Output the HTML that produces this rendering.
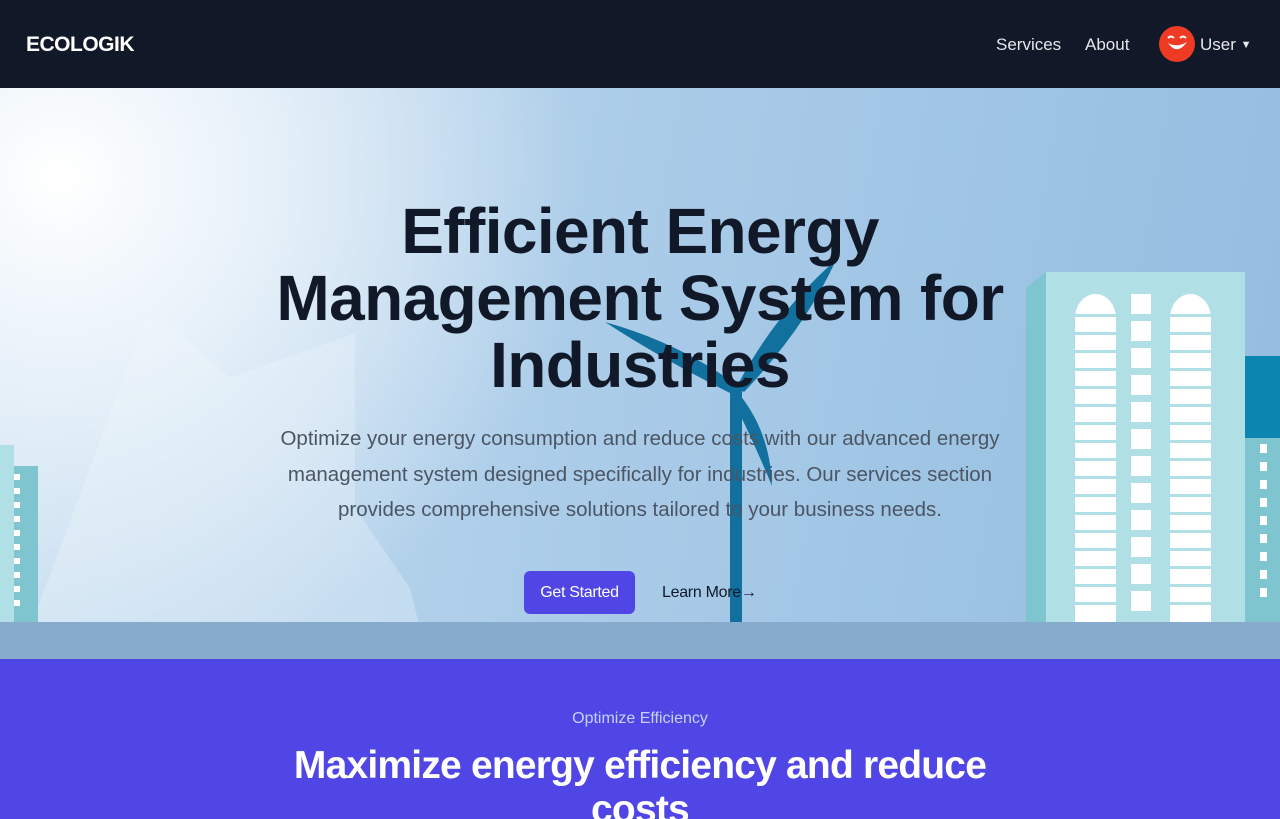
<!DOCTYPE html>
<html><head><meta charset="utf-8"><style>
*{margin:0;padding:0;box-sizing:border-box}
html,body{width:1280px;height:819px;overflow:hidden}
body{font-family:"Liberation Sans",sans-serif;background:#4f46e5}
nav{height:88px;background:#111827;position:relative;color:#fff}
.logo{position:absolute;left:26px;top:33px;font-weight:bold;font-size:21px;letter-spacing:-0.5px}
.nl{position:absolute;top:35px;font-size:17px;color:#e5e7eb}
.av{position:absolute;left:1159px;top:26px;width:36px;height:36px;border-radius:50%;background:#ef3b24}
.hero{position:relative;height:571px;overflow:hidden;background:radial-gradient(ellipse 520px 520px at 60px 90px,#ffffff 0%,#eaf3fa 35%,rgba(180,212,236,0) 100%),linear-gradient(100deg,#c6ddf0 0%,#a9cbe8 50%,#93bde0 100%)}
.ground{position:absolute;left:0;top:534px;width:1280px;height:37px;background:#87abcc}
h1{position:absolute;left:0;width:1280px;top:110px;text-align:center;font-size:64px;line-height:67px;font-weight:bold;color:#111827;letter-spacing:-0.6px}
.p{position:absolute;left:260px;width:760px;top:333px;text-align:center;font-size:20.5px;line-height:35.5px;color:#4b5563}
.btn{position:absolute;left:524px;top:483px;width:111px;height:43px;background:#4f46e5;border-radius:6px;color:#fff;font-size:16px;text-align:center;line-height:43px;letter-spacing:-0.3px}
.lm{position:absolute;left:662px;top:496px;font-size:16px;color:#111827;letter-spacing:-0.3px}
.sec{text-align:center;color:#fff}
</style></head><body>
<nav>
<div class="logo">ECOLOGIK</div>
<div class="nl" style="left:996px">Services</div>
<div class="nl" style="left:1085px">About</div>
<div class="av"><svg width="36" height="36" viewBox="0 0 36 36"><path d="M9 17 Q18 30 28 16 Q18 22 9 17Z" fill="#fff"/><path d="M9 12 q3 -3 6 0" stroke="#fff" stroke-width="2" fill="none"/><path d="M21 12 q3 -3 6 0" stroke="#fff" stroke-width="2" fill="none"/></svg></div>
<div class="nl" style="left:1200px">User <span style="font-size:11px;vertical-align:2px">▼</span></div>
</nav>
<div class="hero">
<svg width="1280" height="571" style="position:absolute;left:0;top:0">
<polygon points="30,540 150,220 230,290 355,245 355,420 410,500 420,540" fill="#f3f8fc" opacity="0.3"/>
<rect x="0" y="357" width="14" height="180" fill="#b0e0e6"/>
<rect x="14" y="378" width="24" height="160" fill="#7fc5cf"/>
<g fill="#fff">
<rect x="14" y="386" width="6" height="6"/><rect x="14" y="400" width="6" height="6"/><rect x="14" y="414" width="6" height="6"/><rect x="14" y="428" width="6" height="6"/><rect x="14" y="442" width="6" height="6"/><rect x="14" y="456" width="6" height="6"/><rect x="14" y="470" width="6" height="6"/><rect x="14" y="484" width="6" height="6"/><rect x="14" y="498" width="6" height="6"/><rect x="14" y="512" width="6" height="6"/></g>
<g fill="#11709e">
<rect x="730" y="300" width="12" height="236"/>
<path d="M738 298 Q680 255 605 234 Q660 270 732 306Z"/>
<path d="M736 300 Q775 225 836 172 Q805 240 744 304Z"/>
<path d="M734 300 Q770 340 772 398 Q752 350 730 306Z"/>
</g>
<polygon points="1026,200 1046,184 1046,536 1026,536" fill="#7fc5cf"/>
<rect x="1046" y="184" width="199" height="352" fill="#b0e0e6"/>
<g fill="#fff">
<path d="M1075 230 a20.5 24 0 0 1 41 0 v306 h-41z"/>
<path d="M1170 230 a20.5 24 0 0 1 41 0 v306 h-41z"/>
</g>
<g fill="#b0e0e6">
<rect x="1075" y="226" width="136" height="3"/><rect x="1075" y="244" width="136" height="3"/><rect x="1075" y="262" width="136" height="3"/><rect x="1075" y="280" width="136" height="3"/><rect x="1075" y="298" width="136" height="3"/><rect x="1075" y="316" width="136" height="3"/><rect x="1075" y="334" width="136" height="3"/><rect x="1075" y="352" width="136" height="3"/><rect x="1075" y="370" width="136" height="3"/><rect x="1075" y="388" width="136" height="3"/><rect x="1075" y="406" width="136" height="3"/><rect x="1075" y="424" width="136" height="3"/><rect x="1075" y="442" width="136" height="3"/><rect x="1075" y="460" width="136" height="3"/><rect x="1075" y="478" width="136" height="3"/><rect x="1075" y="496" width="136" height="3"/><rect x="1075" y="514" width="136" height="3"/>
</g>
<g fill="#fff">
<rect x="1131" y="206" width="20" height="20"/><rect x="1131" y="233" width="20" height="20"/><rect x="1131" y="260" width="20" height="20"/><rect x="1131" y="287" width="20" height="20"/><rect x="1131" y="314" width="20" height="20"/><rect x="1131" y="341" width="20" height="20"/><rect x="1131" y="368" width="20" height="20"/><rect x="1131" y="395" width="20" height="20"/><rect x="1131" y="422" width="20" height="20"/><rect x="1131" y="449" width="20" height="20"/><rect x="1131" y="476" width="20" height="20"/><rect x="1131" y="503" width="20" height="20"/></g>
<rect x="1245" y="268" width="35" height="82" fill="#0a86b0"/>
<rect x="1245" y="350" width="35" height="186" fill="#7fc5cf"/>
<g fill="#fff"><rect x="1260" y="356" width="7" height="9"/><rect x="1260" y="374" width="7" height="9"/><rect x="1260" y="392" width="7" height="9"/><rect x="1260" y="410" width="7" height="9"/><rect x="1260" y="428" width="7" height="9"/><rect x="1260" y="446" width="7" height="9"/><rect x="1260" y="464" width="7" height="9"/><rect x="1260" y="482" width="7" height="9"/><rect x="1260" y="500" width="7" height="9"/></g>
</svg>
<div class="ground"></div>
<h1>Efficient Energy<br>Management System for<br>Industries</h1>
<div class="p">Optimize your energy consumption and reduce costs with our advanced energy management system designed specifically for industries. Our services section provides comprehensive solutions tailored to your business needs.</div>
<div class="btn">Get Started</div>
<div class="lm">Learn More→</div>
</div>
<div class="sec">
<div style="padding-top:51px;font-size:16px;color:#c7d2fe">Optimize Efficiency</div>
<div style="margin-top:16px;font-size:39px;font-weight:bold;line-height:44px;letter-spacing:-0.8px;width:720px;margin-left:280px">Maximize energy efficiency and reduce costs</div>
</div>
</body></html>
